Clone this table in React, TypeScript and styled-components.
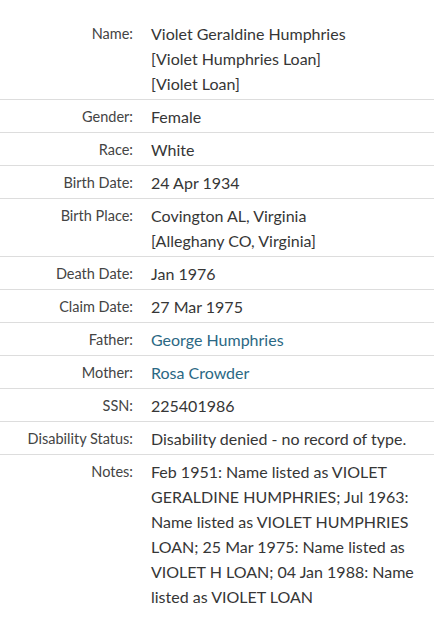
import { createGlobalStyle, styled } from 'styled-components'

const GlobalStyle = createGlobalStyle`
  html, body {
    margin: 0;
    padding: 0;
    background: #fff;
  }
  body {
    font-family: Lato, 'Noto Sans', sans-serif;
    color: #333;
  }
`

const RecordTable = styled.div`
  padding-top: 17px;
  width: 434px;
`

const Row = styled.div<{ last?: boolean }>`
  display: grid;
  grid-template-columns: 133px 1fr;
  column-gap: 18px;
  align-items: start;
  padding: 4px 8px 3px 0;
  border-bottom: ${(props) => (props.last ? 'none' : '1px solid #dddddd')};
`

const Label = styled.div`
  text-align: right;
  font-size: 14.5px;
  line-height: 24px;
  padding-top: 1px;
  color: #444;
  white-space: nowrap;
`

const Value = styled.div`
  font-size: 16px;
  line-height: 25px;
  color: #363636;
`

const Line = styled.span`
  display: block;
`

const Link = styled.a`
  color: #2b6884;
  text-decoration: none;
  cursor: pointer;
`

type TRecord = { label: string; lines: string[]; link?: boolean }

const records: TRecord[] = [
  { label: 'Name:', lines: ['Violet Geraldine Humphries', '[Violet Humphries Loan]', '[Violet Loan]'] },
  { label: 'Gender:', lines: ['Female'] },
  { label: 'Race:', lines: ['White'] },
  { label: 'Birth Date:', lines: ['24 Apr 1934'] },
  { label: 'Birth Place:', lines: ['Covington AL, Virginia', '[Alleghany CO, Virginia]'] },
  { label: 'Death Date:', lines: ['Jan 1976'] },
  { label: 'Claim Date:', lines: ['27 Mar 1975'] },
  { label: 'Father:', lines: ['George Humphries'], link: true },
  { label: 'Mother:', lines: ['Rosa Crowder'], link: true },
  { label: 'SSN:', lines: ['225401986'] },
  { label: 'Disability Status:', lines: ['Disability denied - no record of type.'] },
  {
    label: 'Notes:',
    lines: [
      'Feb 1951: Name listed as VIOLET GERALDINE HUMPHRIES; Jul 1963: Name listed as VIOLET HUMPHRIES LOAN; 25 Mar 1975: Name listed as VIOLET H LOAN; 04 Jan 1988: Name listed as VIOLET LOAN',
    ],
  },
]

export default function App() {
  return (
    <>
      <GlobalStyle />
      <RecordTable>
        {records.map((record, index) => (
          <Row key={record.label} last={index === records.length - 1}>
            <Label>{record.label}</Label>
            <Value>
              {record.lines.map((line) => (
                <Line key={line}>{record.link ? <Link>{line}</Link> : line}</Line>
              ))}
            </Value>
          </Row>
        ))}
      </RecordTable>
    </>
  )
}
